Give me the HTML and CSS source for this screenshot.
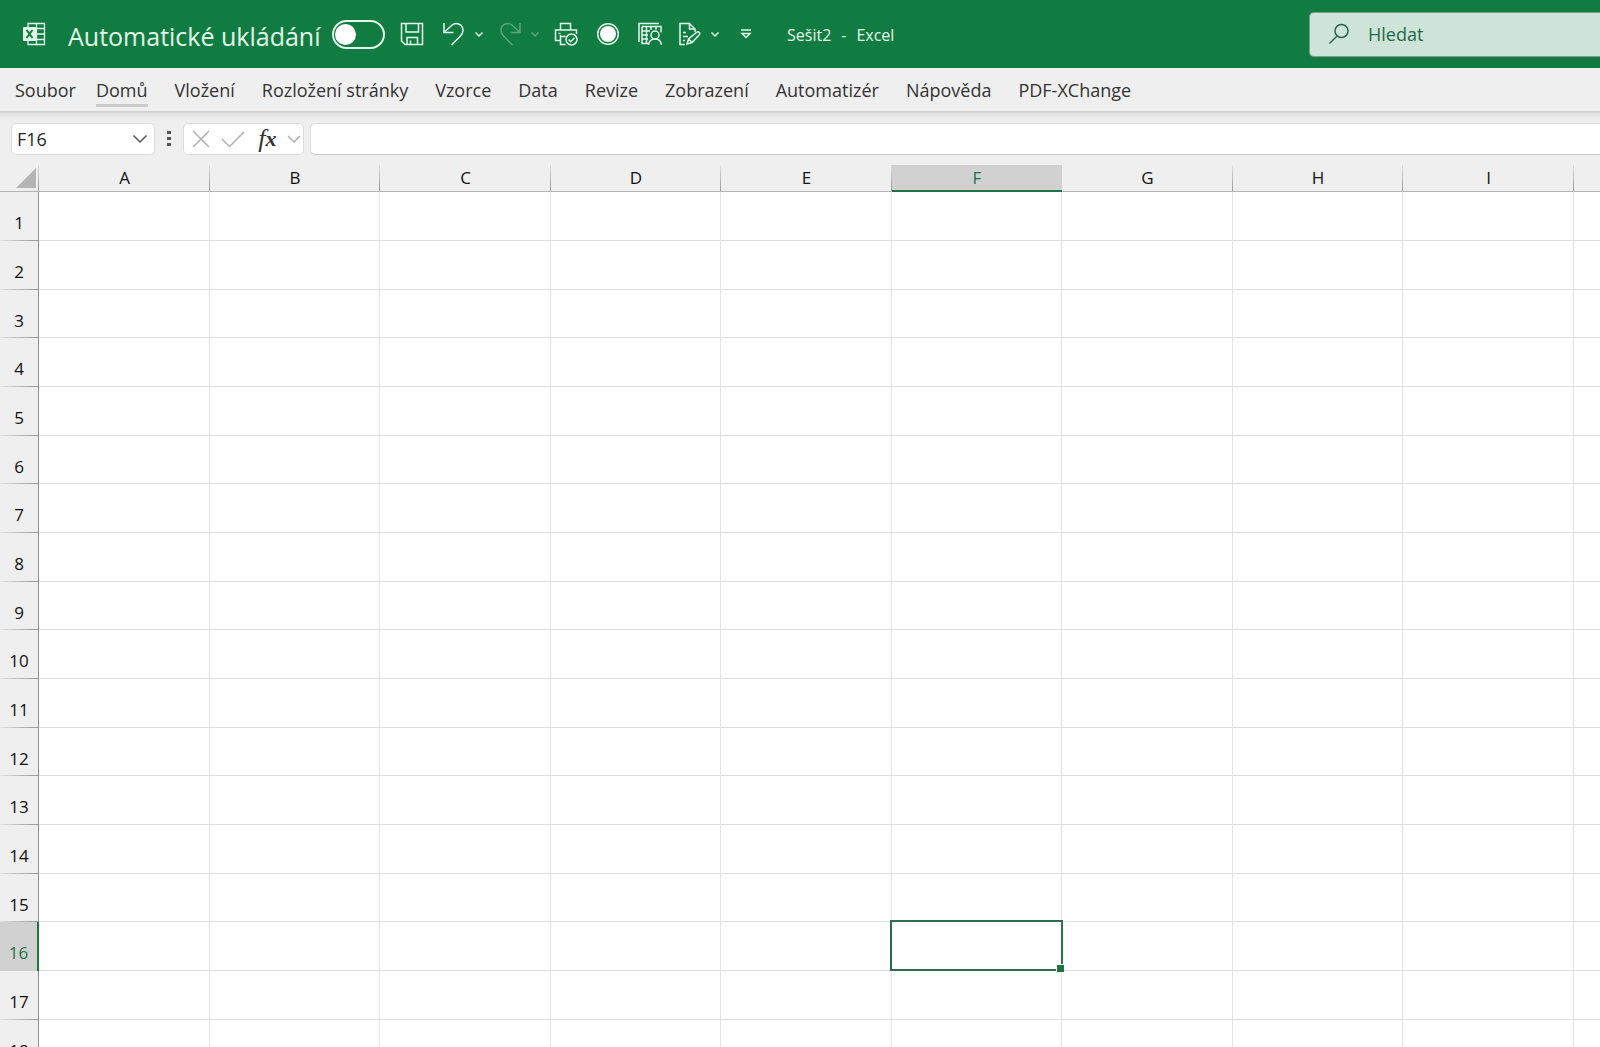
FILE: index.html
```html
<!DOCTYPE html>
<html lang="cs">
<head>
  <meta charset="UTF-8">
  <meta name="viewport" content="width=device-width, initial-scale=1.0">
  <title>Sešit2 - Excel</title>
  <link rel="stylesheet" href="styles.css">
</head>
<body>

  <header class="titlebar">
    <svg class="logo" width="24" height="24" viewBox="0 0 24 24" aria-hidden="true">
      <path d="M6 1.500h16.500v21H6zM14.500 1.500v21M6 6.500h16.500M6 12h16.500M6 17.500h16.500" fill="none" stroke="#e3f7ea" stroke-width="1.300"/>
      <rect x="1" y="5" width="13" height="14" rx="1" fill="#e3f7ea"/>
      <path d="M4.500 8l6 8M10.500 8l-6 8" stroke="#107c41" stroke-width="2"/>
    </svg>

    <label class="autosave-label" for="autosave">Automatické ukládání</label>
    <input class="toggle" type="checkbox" id="autosave">

    <div class="quick">
      <button class="tool" aria-label="Uložit">
        <svg width="24" height="24" viewBox="0 0 24 24">
          <path d="M1.500 1.500h21v21H5l-3.500-3.500zM6 1.500v8.500h12.500V1.500M7 22.500v-7h10.500v7M10.500 22v-3.500"/>
        </svg>
      </button>
      <button class="tool undo" aria-label="Zpět">
        <svg width="24" height="24" viewBox="0 0 24 24">
          <path d="M2 1v9.500h9.500M2.500 10L9 4C13-.5 21 1.500 21 8.500c0 3-1.500 4.500-3 6l-8.500 8.500"/>
        </svg>
      </button>
      <button class="arrow" aria-label="Možnosti zpět">
        <svg width="10" height="10" viewBox="0 0 10 10"><path d="M1.500 3.500L5 7l3.500-3.500"/></svg>
      </button>
      <button class="tool redo" aria-label="Znovu" disabled>
        <svg width="24" height="24" viewBox="0 0 24 24">
          <path d="M22 1v9.500h-9.500M21.500 10L15 4C11-.5 3 1.500 3 8.500c0 3 1.500 4.500 3 6l8.500 8.500"/>
        </svg>
      </button>
      <button class="arrow" aria-label="Možnosti znovu" disabled>
        <svg width="10" height="10" viewBox="0 0 10 10"><path d="M1.500 3.500L5 7l3.500-3.500"/></svg>
      </button>
      <button class="tool print" aria-label="Náhled a tisk">
        <svg width="24" height="24" viewBox="0 0 24 24">
          <path d="M6.500 8V1.500h10V8M6 18.500H1.500V8h21v4M4.500 11.500h2M6.500 13v9.500h5M6.500 14.500h5"/>
          <circle cx="17.500" cy="17.500" r="5.500"/>
          <path d="M14.500 17.500l2.200 2.200 3.800-3.900"/>
        </svg>
      </button>
      <button class="tool record" aria-label="Záznam">
        <svg width="24" height="24" viewBox="0 0 24 24">
          <circle cx="12" cy="12" r="10.300"/>
          <circle class="solid" cx="12" cy="12" r="8"/>
        </svg>
      </button>
      <button class="tool lookup" aria-label="Kontrola přístupnosti">
        <svg width="24" height="24" viewBox="0 0 24 24">
          <path d="M1 20V1.500h20M4 4.500h19v6M4 4.500v17h6.500M4 9h8M4 13h6M4 17h6M8.500 4.500v17M13 4.500V8M18 4.500v3"/>
          <circle cx="17" cy="13" r="4"/>
          <path d="M10.500 23c.5-4 3-6 6.500-6s6 2 6.500 6"/>
        </svg>
      </button>
      <button class="tool edit" aria-label="Upravit">
        <svg width="24" height="24" viewBox="0 0 24 24">
          <path d="M7 22.500H2v-21h9.500L17 7v3M11.500 1.500V7H17M5 10.500h3M5 14.500h5M5 18.500h2"/>
          <path d="M9 22l1.500-5 8.500-7c1.500-1 3.500 1 2.500 2.500L14 20.500zM10.500 17l3.500 3.500"/>
        </svg>
      </button>
      <button class="arrow" aria-label="Možnosti úprav">
        <svg width="10" height="10" viewBox="0 0 10 10"><path d="M1.500 3.500L5 7l3.500-3.500"/></svg>
      </button>
      <button class="customize" aria-label="Přizpůsobit panel">
        <svg width="12" height="12" viewBox="0 0 12 12"><path d="M1 2h10M2 5.500h8L6 9.500z"/></svg>
      </button>
    </div>

    <div class="doc-title"><span>Sešit2</span><span>-</span><span>Excel</span></div>

    <div class="search">
      <svg width="22" height="22" viewBox="0 0 22 22" aria-hidden="true">
        <circle cx="13.500" cy="8" r="6.500"/>
        <path d="M9 13l-7.500 7.500"/>
      </svg>
      <input type="search" placeholder="Hledat" aria-label="Hledat">
    </div>
  </header>

  <nav class="tabs">
    <a href="#" class="file">Soubor</a>
    <a href="#" class="active">Domů</a>
    <a href="#">Vložení</a>
    <a href="#">Rozložení stránky</a>
    <a href="#">Vzorce</a>
    <a href="#">Data</a>
    <a href="#">Revize</a>
    <a href="#">Zobrazení</a>
    <a href="#">Automatizér</a>
    <a href="#">Nápověda</a>
    <a href="#">PDF-XChange</a>
  </nav>

  <div class="formula-bar">
    <div class="name-box">
      <input type="text" value="F16" aria-label="Pole názvů">
      <button aria-label="Seznam názvů">
        <svg width="16" height="10" viewBox="0 0 16 10"><path d="M1.500 1.500L8 8l6.500-6.500"/></svg>
      </button>
    </div>
    <div class="dots"><i></i><i></i><i></i></div>
    <div class="formula-tools">
      <button aria-label="Zrušit">
        <svg width="18" height="18" viewBox="0 0 18 18"><path d="M1 1l16 16M17 1L1 17"/></svg>
      </button>
      <button aria-label="Zadat">
        <svg width="24" height="18" viewBox="0 0 24 18"><path d="M1 9l7.500 7.500L23 2"/></svg>
      </button>
      <button class="fx" aria-label="Vložit funkci">f<b>x</b></button>
      <button aria-label="Další funkce">
        <svg width="14" height="10" viewBox="0 0 14 10"><path d="M1 2l6 6 6-6"/></svg>
      </button>
    </div>
    <input class="formula" type="text" aria-label="Řádek vzorců">
  </div>

  <main class="sheet">
    <table>
      <thead><tr id="columns"></tr></thead>
      <tbody id="rows"></tbody>
    </table>
  </main>

  <script src="script.js"></script>
</body>
</html>
```
FILE: styles.css
```css
* {
  box-sizing: border-box;
}

html, body {
  margin: 0;
  padding: 0;
}

body {
  display: flex;
  flex-direction: column;
  height: 100vh;
  overflow: hidden;
  background: #efefef;
  color: #262626;
  font-family: 'Segoe UI', 'Open Sans', sans-serif;
}

button, input {
  margin: 0;
  padding: 0;
  border: none;
  background: none;
  color: inherit;
  font: inherit;
}

button {
  display: flex;
  align-items: center;
  justify-content: center;
  flex: none;
}

svg {
  display: block;
  flex: none;
}

/* title bar */
.titlebar {
  display: flex;
  align-items: center;
  flex: none;
  height: 68px;
  padding-left: 22px;
  background: #107c41;
  color: #e3f7ea;
}

.autosave-label {
  margin-left: 22px;
  padding-top: 4px;
  width: 264px;
  font-size: 25px;
  line-height: 36px;
  white-space: nowrap;
}

.toggle {
  appearance: none;
  display: flex;
  align-items: center;
  flex: none;
  width: 53px;
  height: 29px;
  padding: 1px;
  border: 2px solid #e3f7ea;
  border-radius: 15px;
}

.toggle::before {
  content: "";
  width: 21px;
  height: 21px;
  border-radius: 50%;
  background: #fff;
}

.toggle:checked {
  justify-content: flex-end;
}

.quick {
  display: flex;
  align-items: center;
  margin-left: 15px;
}

.quick svg {
  fill: none;
  stroke: #e3f7ea;
  stroke-width: 1.5;
}

.quick .solid {
  fill: #fff;
  stroke: none;
}

.quick button:disabled {
  opacity: 0.35;
}

.arrow {
  margin-left: 8px;
}

.undo {
  margin-left: 18px;
}

.redo,
.print {
  margin-left: 14px;
}

.record,
.lookup {
  margin-left: 18px;
}

.edit {
  margin-left: 16px;
}

.customize {
  margin-left: 20px;
}

.doc-title {
  display: flex;
  gap: 10px;
  margin-left: 35px;
  padding-top: 2px;
  font-size: 16px;
  line-height: 24px;
}

.search {
  display: flex;
  align-items: center;
  gap: 18px;
  width: 291px;
  height: 45px;
  margin-left: auto;
  padding-left: 18px;
  border: 1px solid #7d9c89;
  border-right: none;
  border-radius: 5px 0 0 5px;
  background: #cfe4d8;
  color: #22694a;
}

.search svg {
  fill: none;
  stroke: #22694a;
  stroke-width: 1.5;
}

.search input {
  flex: 1;
  min-width: 0;
  font-size: 18px;
}

.search input::placeholder {
  color: #22694a;
  opacity: 1;
}

/* ribbon tabs */
.tabs {
  display: flex;
  gap: 27px;
  flex: none;
  height: 43px;
  padding: 7px 15px 0;
}

.tabs a {
  height: 32px;
  color: #333;
  font-size: 18px;
  line-height: 31px;
  text-decoration: none;
  white-space: nowrap;
}

.tabs .file {
  margin-right: -7px;
}

.tabs .active {
  border-bottom: 3px solid #cbcbcb;
}

/* formula bar */
.formula-bar {
  display: flex;
  align-items: flex-start;
  flex: none;
  height: 54px;
  padding: 12px 0 0 11px;
  background: linear-gradient(#cdcdcd, #e3e3e3 3px, #efefef 10px);
}

.name-box,
.formula-tools,
.formula {
  height: 32px;
  border: 1px solid #dcdcdc;
  border-radius: 5px;
  background: #fff;
}

.name-box {
  display: flex;
  width: 144px;
  padding: 0 6px 0 5px;
}

.name-box input {
  flex: 1;
  min-width: 0;
  font-size: 18px;
}

.formula-bar svg {
  fill: none;
  stroke: #b0b0b0;
  stroke-width: 1.5;
}

.name-box svg {
  stroke: #555;
}

.dots {
  display: flex;
  flex-direction: column;
  gap: 3px;
  width: 4px;
  margin: 8px 12px 0 12px;
}

.dots i {
  height: 3px;
  background: #555;
}

.formula-tools {
  display: flex;
  justify-content: space-between;
  width: 121px;
  padding: 0 2px 0 8px;
}

.fx {
  padding-left: 3px;
  color: #333;
  font-family: 'Liberation Serif', serif;
  font-size: 26px;
  font-style: italic;
  line-height: 26px;
}

.fx b {
  font-size: 22px;
}

.formula {
  flex: 1;
  min-width: 0;
  margin-left: 6px;
  padding: 0 8px;
  border-right: none;
  border-bottom-color: #c8c8c8;
  border-radius: 5px 0 0 5px;
  font-size: 18px;
}

/* grid */
.sheet {
  flex: 1;
  min-height: 0;
  overflow: hidden;
}

table {
  table-layout: fixed;
  width: 0;
  border-collapse: separate;
  border-spacing: 0;
}

th {
  padding: 0;
  color: #111;
  font-size: 17px;
  font-weight: normal;
}

thead th {
  width: 170px;
  height: 27px;
  border-bottom: 1px solid #b5b5b5;
  background: linear-gradient(#dedede, #999) right / 1px 100% no-repeat;
  line-height: 26px;
}

thead th:nth-child(even) {
  width: 171px;
}

thead .corner {
  width: 39px;
}

.corner svg {
  margin-left: 15px;
  fill: #b4b4b4;
}

tbody tr {
  height: 49px;
}

/* row height is 48.67 on average */
tbody tr:nth-child(3n) {
  height: 48px;
}

tbody th {
  padding-top: 13px;
  border-right: 1px solid #8f8f8f;
  background: linear-gradient(to right, #dedede, #999) bottom / 100% 1px no-repeat;
  line-height: 24px;
}

td {
  position: relative;
  padding: 0;
  border-right: 1px solid #e4e4e4;
  border-bottom: 1px solid #e0e0e0;
  background: #fff;
}

thead .current {
  border-bottom: 2px solid #217346;
  background: #d1d1d1;
  color: #217346;
  line-height: 25px;
}

tbody .current {
  border-right: 2px solid #217346;
  background: #d1d1d1;
  color: #217346;
}

.selected::before {
  content: "";
  position: absolute;
  inset: -2px -2px -1px -2px;
  border: 2px solid #2a6e4c;
  z-index: 1;
}

.selected::after {
  content: "";
  position: absolute;
  right: -3px;
  bottom: -2px;
  width: 7px;
  height: 7px;
  border: 1px solid #fff;
  border-right: none;
  border-bottom: none;
  background: #217346;
  z-index: 2;
}
```
FILE: script.js
```js
const columns = document.getElementById('columns');
const rows = document.getElementById('rows');
// the last column is only partly in view and has no letter
const letters = [...'ABCDEFGHI', ''];
const rowCount = 18;
const selected = { column: 'F', row: 16 };

function renderSheet() {
  columns.innerHTML = `<th class="corner"><svg width="22" height="22" viewBox="0 0 22 22"><path d="M21 1v20H1z"/></svg></th>`;
  for (const letter of letters) {
    columns.innerHTML += `<th class="${letter === selected.column ? 'current' : ''}">${letter}</th>`;
  }

  let html = '';
  for (let row = 1; row <= rowCount; row++) {
    html += `<tr><th class="${row === selected.row ? 'current' : ''}">${row}</th>`;
    for (const letter of letters) {
      const isSelected = letter === selected.column && row === selected.row;
      html += `<td class="${isSelected ? 'selected' : ''}"></td>`;
    }
    html += '</tr>';
  }
  rows.innerHTML = html;
}

renderSheet();
```
